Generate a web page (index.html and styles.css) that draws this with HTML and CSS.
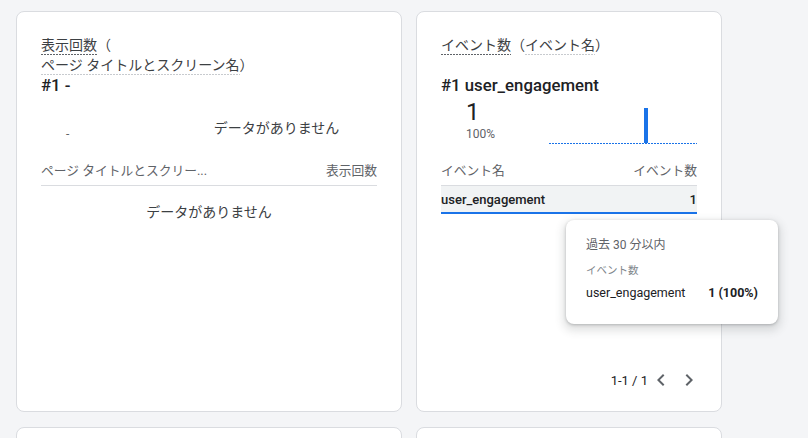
FILE: index.html
```html
<!DOCTYPE html>
<html lang="ja">
<head>
<meta charset="utf-8">
<link rel="stylesheet" href="styles.css">
</head>
<body>
<div class="grid">
  <section class="card">
    <div class="title"><span class="u1">表示回数</span>（<br><span class="u2">ページ タイトルとスクリーン名</span>）</div>
    <div class="top">#1 -</div>
    <div class="summary">
      <div class="value">
        <div class="big"></div>
        <div class="pct">-</div>
      </div>
      <div class="chart nodata">データがありません</div>
    </div>
    <div class="thead"><span>ページ タイトルとスクリー...</span><span>表示回数</span></div>
    <div class="empty">データがありません</div>
  </section>

  <section class="card">
    <div class="title"><span class="u1">イベント数</span>（<span class="u2">イベント名</span>）</div>
    <div class="top">#1 user_engagement</div>
    <div class="summary">
      <div class="value">
        <div class="big">1</div>
        <div class="pct">100%</div>
      </div>
      <div class="chart">
        <div class="bar-wrap"><div class="bar"></div></div>
        <div class="baseline"></div>
      </div>
    </div>
    <div class="thead"><span>イベント名</span><span>イベント数</span></div>
    <div class="row active"><span>user_engagement</span><span>1</span></div>
    <div class="pager">
      <span class="range">1-1 / 1</span>
      <svg class="chev" viewBox="0 0 24 24"><path d="M15.41 7.41L14 6l-6 6 6 6 1.41-1.41L10.83 12z"/></svg>
      <svg class="chev last" viewBox="0 0 24 24"><path d="M10 6L8.59 7.41 13.17 12l-4.58 4.59L10 18l6-6z"/></svg>
    </div>
    <div class="tooltip">
      <div class="tt-time">過去 30 分以内</div>
      <div class="tt-label">イベント数</div>
      <div class="tt-row"><span>user_engagement</span><b>1 (100%)</b></div>
    </div>
  </section>

  <section class="card"></section>
  <section class="card"></section>
</div>
</body>
</html>
```

FILE: styles.css
```css
* { box-sizing: border-box; }
html, body { margin: 0; height: 100%; overflow: hidden; }
body {
  background: #f4f5f7;
  font-family: Roboto, "Noto Sans CJK JP", sans-serif;
  color: #202124;
}
.grid {
  display: grid;
  grid-template-columns: 386px 306px;
  grid-auto-rows: 401px;
  gap: 15px 14px;
  padding: 11px 0 0 16px;
}
.card {
  position: relative;
  background: #fff;
  border: 1px solid #dadce0;
  border-radius: 8px;
  padding: 23px 24px 19px;
  display: flex;
  flex-direction: column;
}
.title {
  height: 38px;
  font-size: 14px;
  line-height: 20px;
  color: #3c4043;
}
.u1, .u2 {
  padding-bottom: 2px;
  background-repeat: repeat-x;
  background-position: left bottom;
  background-size: 3px 1px;
}
.u1 { background-image: linear-gradient(to right, #5f6368 2px, transparent 2px); }
.u2 { background-image: linear-gradient(to right, #c8cbcf 2px, transparent 2px); }
.top {
  height: 24px;
  line-height: 24px;
  font-size: 16.75px;
  font-weight: 500;
  color: #202124;
}
.summary {
  display: flex;
  height: 56px;
}
.value {
  width: 42%;
  padding: 1px 0 0 25px;
}
.big {
  height: 28px;
  line-height: 28px;
  font-size: 24px;
  color: #202124;
}
.pct {
  line-height: 16px;
  font-size: 12px;
  color: #5f6368;
}
.chart {
  flex: 1;
  display: flex;
  flex-direction: column;
  padding-top: 11px;
}
.bar-wrap {
  height: 35px;
  padding-left: 95px;
}
.bar {
  width: 4px;
  height: 100%;
  background: #1a73e8;
}
.baseline {
  height: 1px;
  background-image: linear-gradient(to right, #1a73e8 2px, transparent 2px);
  background-size: 3px 1px;
  background-repeat: repeat-x;
}
.nodata {
  flex-direction: row;
  align-items: center;
  justify-content: center;
  font-size: 14px;
  color: #3c4043;
  padding: 4px 6px 0 0;
}
.thead {
  display: flex;
  justify-content: space-between;
  align-items: center;
  height: 33px;
  border-bottom: 1px solid #dadce0;
  font-size: 12.75px;
  color: #5f6368;
}
.empty {
  text-align: center;
  font-size: 14px;
  line-height: 20px;
  padding-top: 16px;
  color: #3c4043;
}
.row {
  display: flex;
  justify-content: space-between;
  align-items: center;
  height: 28px;
  font-size: 13px;
}
.row.active {
  background: #f1f3f4;
  border-bottom: 2px solid #1a73e8;
  font-weight: 500;
}
.pager {
  margin-top: auto;
  display: flex;
  justify-content: flex-end;
  align-items: center;
  height: 24px;
  font-size: 13px;
  color: #202124;
}
.range { margin-right: 1px; }
.chev { width: 24px; height: 24px; fill: #5f6368; }
.chev.last { margin-left: 4px; margin-right: -4px; }
.tooltip {
  position: absolute;
  left: 149px;
  top: 208px;
  width: 212px;
  height: 104px;
  background: #fff;
  border-radius: 8px;
  box-shadow: 0 1px 3px rgba(60, 64, 67, .3), 0 4px 8px 3px rgba(60, 64, 67, .15);
  padding: 17px 20px 0;
}
.tt-time { font-size: 12px; line-height: 16px; color: #5f6368; }
.tt-label { font-size: 10.5px; line-height: 14px; color: #80868b; margin-top: 11px; }
.tt-row {
  display: flex;
  justify-content: space-between;
  font-size: 12.5px;
  line-height: 16px;
  margin-top: 7px;
  color: #202124;
}
.tt-row b { font-weight: 700; }
```
